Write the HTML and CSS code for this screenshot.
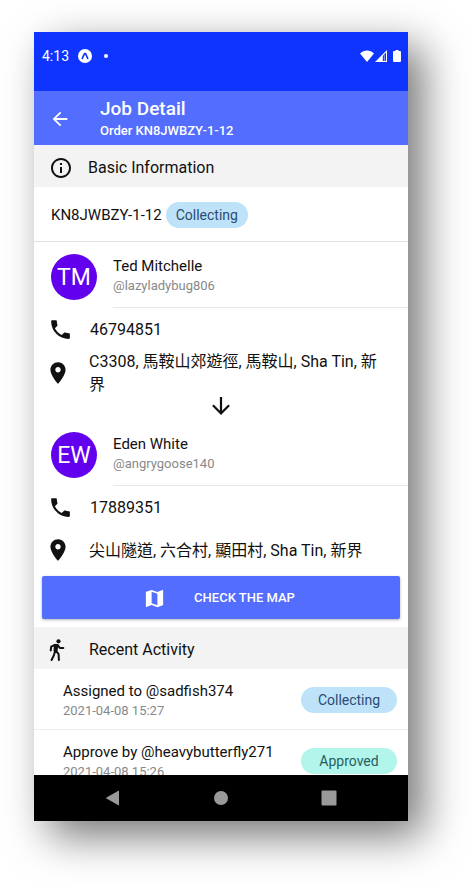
FILE: index.html
```html
<!DOCTYPE html>
<html lang="en">
<head>
<meta charset="utf-8">
<meta name="viewport" content="width=device-width, initial-scale=1">
<title>Job Detail</title>
<link rel="stylesheet" href="styles.css">
</head>
<body>
<div class="phone">
  <div class="status">
    <span class="time">4:13</span>
    <svg class="expo" viewBox="0 0 14 14"><circle cx="7" cy="7" r="7" fill="#fff"/><path d="M4.300 9.400 6.500 4.600h1l2.200 4.800" fill="none" stroke="#1034ff" stroke-width="1.600" stroke-linecap="round" stroke-linejoin="round"/></svg>
    <span class="dot"></span>
    <span class="signals">
      <svg width="14" height="12" viewBox="0 0 14 12"><path d="M0 3.400C4 -.6 10 -.6 14 3.400L7 12z" fill="#fff"/></svg>
      <svg width="12" height="12" viewBox="0 0 12 12"><path d="M12 0v12H0z" fill="#fff"/><path d="M7.800 6 11 2.600V11H7.800z" fill="#1034ff"/><path d="M9.400 5v6" stroke="#8fa0ff" stroke-width="1"/></svg>
      <svg class="battery" width="8" height="12" viewBox="0 0 8 12"><path d="M2.500 0h3v1H7q1 0 1 1v9q0 1-1 1H1q-1 0-1-1V2q0-1 1-1h1.500z" fill="#fff"/></svg>
    </span>
  </div>
  <header class="appbar">
    <button class="back" aria-label="Back"><svg width="22" height="22" viewBox="0 0 24 24"><path d="M20 11H7.830l5.590-5.590L12 4l-8 8 8 8 1.410-1.410L7.830 13H20z"/></svg></button>
    <div>
      <h1>Job Detail</h1>
      <p class="subtitle">Order KN8JWBZY-1-12</p>
    </div>
  </header>
  <main>
    <h2 class="section">
      <svg width="24" height="24" viewBox="0 0 24 24"><path d="M11 17h2v-6h-2zm1-15C6.480 2 2 6.480 2 12s4.480 10 10 10 10-4.480 10-10S17.520 2 12 2m0 18c-4.410 0-8-3.590-8-8s3.590-8 8-8 8 3.590 8 8-3.590 8-8 8M11 9h2V7h-2z"/></svg>
      Basic Information
    </h2>
    <div class="order">KN8JWBZY-1-12 <span class="chip collecting">Collecting</span></div>
    <div class="person">
      <span class="avatar">TM</span>
      <div class="who"><p class="name">Ted Mitchelle</p><p class="meta">@lazyladybug806</p></div>
    </div>
    <div class="line phone-line">
      <svg width="25" height="25" viewBox="0 0 24 24"><path d="M6.620 10.790c1.440 2.830 3.760 5.140 6.590 6.590l2.200-2.200c.27-.27.67-.36 1.020-.24 1.120.37 2.330.57 3.570.57.550 0 1 .45 1 1V20c0 .55-.45 1-1 1-9.390 0-17-7.610-17-17 0-.55.450-1 1-1h3.500c.55 0 1 .45 1 1 0 1.250.2 2.450.57 3.570.110.350.030.740-.250 1.020z"/></svg>
      <span>46794851</span>
    </div>
    <div class="line address">
      <svg width="26" height="26" viewBox="0 0 24 24"><path d="M12 2C8.130 2 5 5.130 5 9c0 5.250 7 13 7 13s7-7.750 7-13c0-3.870-3.130-7-7-7m0 9.500c-1.380 0-2.500-1.120-2.500-2.500s1.120-2.500 2.500-2.500 2.500 1.120 2.500 2.500-1.120 2.500-2.500 2.500"/></svg>
      <span>C3308, 馬鞍山郊遊徑, 馬鞍山, Sha Tin, 新界</span>
    </div>
    <div class="down"><svg width="20" height="20" viewBox="3 3 18 18"><path d="m20 12-1.410-1.410L13 16.170V4h-2v12.170l-5.580-5.590L4 12l8 8z"/></svg></div>
    <div class="person">
      <span class="avatar">EW</span>
      <div class="who"><p class="name">Eden White</p><p class="meta">@angrygoose140</p></div>
    </div>
    <div class="line phone-line">
      <svg width="25" height="25" viewBox="0 0 24 24"><path d="M6.620 10.790c1.440 2.830 3.760 5.140 6.590 6.590l2.200-2.200c.27-.27.67-.36 1.020-.24 1.120.37 2.330.57 3.570.57.550 0 1 .45 1 1V20c0 .55-.45 1-1 1-9.390 0-17-7.610-17-17 0-.55.450-1 1-1h3.500c.55 0 1 .45 1 1 0 1.250.2 2.450.57 3.570.110.350.030.740-.250 1.020z"/></svg>
      <span>17889351</span>
    </div>
    <div class="line address">
      <svg width="26" height="26" viewBox="0 0 24 24"><path d="M12 2C8.130 2 5 5.130 5 9c0 5.250 7 13 7 13s7-7.750 7-13c0-3.870-3.130-7-7-7m0 9.500c-1.380 0-2.500-1.120-2.500-2.500s1.120-2.500 2.500-2.500 2.500 1.120 2.500 2.500-1.120 2.500-2.500 2.500"/></svg>
      <span>尖山隧道, 六合村, 顯田村, Sha Tin, 新界</span>
    </div>
    <button class="map">
      <svg width="23" height="23" viewBox="0 0 24 24"><path d="m20.500 3-.16.030L15 5.100 9 3 3.360 4.900c-.21.070-.36.250-.36.480V20.500c0 .28.220.5.500.5l.16-.030L9 18.900l6 2.100 5.640-1.900c.210-.070.360-.250.360-.480V3.500c0-.28-.22-.5-.5-.5M15 19l-6-2.110V5l6 2.110z"/></svg>
      CHECK THE MAP
    </button>
    <h2 class="section walk">
      <svg width="16" height="22" viewBox="0 0 16 22"><circle cx="9.500" cy="2.300" r="2.100"/><path d="M5.600 5.600h3l-.8 6.800-2.600-.6z" stroke="currentColor" stroke-width="1.400" stroke-linejoin="round"/><path d="M6 5.800 2.200 7.600 1.700 11.400M8.600 6l2.200 2.900h3.500M6.200 11.500 5 16l-2.400 5M7.200 12l2.400 3.200.3 5.800" fill="none" stroke="currentColor" stroke-width="2" stroke-linecap="round" stroke-linejoin="round"/></svg>
      Recent Activity
    </h2>
    <ul class="activity">
      <li><div><p class="name">Assigned to @sadfish374</p><p class="meta">2021-04-08 15:27</p></div><span class="chip collecting">Collecting</span></li>
      <li><div><p class="name">Approve by @heavybutterfly271</p><p class="meta">2021-04-08 15:26</p></div><span class="chip approved">Approved</span></li>
    </ul>
  </main>
  <nav class="navbar">
    <button aria-label="Back"><svg width="16" height="16" viewBox="0 0 16 16"><path d="M14 1v14q0 .6-.6.300L1.500 8.500q-.8-.5 0-1L13.400.7Q14 .4 14 1z"/></svg></button>
    <button aria-label="Home"><svg width="16" height="16" viewBox="0 0 16 16"><circle cx="8" cy="8" r="7"/></svg></button>
    <button aria-label="Recent apps"><svg width="16" height="16" viewBox="0 0 16 16"><rect x=".5" y=".5" width="15" height="15" rx="1"/></svg></button>
  </nav>
</div>
</body>
</html>
```
FILE: styles.css
```css
* { box-sizing: border-box; }
body {
  margin: 0;
  height: 100vh;
  padding: 32px 64px 66px 34px;
  display: flex;
  background: #fff;
  color: #111;
  font: 16px/20px Roboto, "Noto Sans CJK TC", sans-serif;
}
h1, h2, p, ul { margin: 0; padding: 0; font-weight: 400; }
button { border: 0; padding: 0; background: none; font: inherit; color: inherit; }
svg { display: block; flex: none; fill: currentColor; }

.phone {
  flex: 1;
  min-width: 0;
  display: flex;
  flex-direction: column;
  background: #fff;
  box-shadow: 15px 15px 40px rgba(0, 0, 0, .54);
}
.status {
  flex: none;
  display: flex;
  align-items: center;
  height: 59px;
  padding: 0 7px 12px 8px;
  background: #1034ff;
  color: #fff;
  font-size: 14px;
}
.expo { width: 14px; height: 14px; margin-left: 9px; }
.dot { width: 4px; height: 4px; margin-left: 12px; border-radius: 50%; background: #fff; }
.signals { display: flex; gap: 1px; margin-left: auto; }
.battery { margin-left: 5px; }

.appbar {
  flex: none;
  display: flex;
  align-items: center;
  gap: 29px;
  height: 54px;
  padding: 2px 0 0 15px;
  background: #536dfe;
  color: #fff;
}
.appbar h1 { font-size: 19px; line-height: 24px; font-weight: 500; }
.subtitle { font-size: 13px; line-height: 20px; font-weight: 500; }

main { flex: 1; min-height: 0; overflow: hidden; }
.section {
  display: flex;
  align-items: center;
  gap: 15px;
  height: 42px;
  padding: 3px 15px 0;
  background: #f3f3f3;
  font-size: 16px;
}
.walk { gap: 24px; }
.order {
  display: flex;
  align-items: center;
  gap: 4px;
  height: 55px;
  padding: 1px 0 0 17px;
  border-bottom: 1px solid #e0e0e0;
  font-size: 15px;
}
.chip { border-radius: 13px; line-height: 26px; font-size: 14px; text-align: center; }
.collecting { background: #bee3f8; color: #2c4a74; }
.approved { background: #b2f5ea; color: #285e61; }
.order .chip { padding: 0 10px; }

.person { display: flex; gap: 16px; height: 66px; padding-left: 17px; }
.avatar {
  width: 46px;
  height: 46px;
  margin-top: 12px;
  border-radius: 50%;
  background: #6200ee;
  color: #fff;
  font-size: 23px;
  line-height: 48px;
  text-align: center;
}
.who { flex: 1; padding-top: 14px; border-bottom: 1px solid #e8e8e8; }
.name { font-size: 15px; line-height: 20px; color: #111; }
.meta { font-size: 13px; line-height: 19px; color: #888; }

.line { display: flex; align-items: center; padding: 0 16px 0 11px; line-height: 23px; }
.phone-line { gap: 17px; height: 42px; padding: 1px 0 0 14px; }
.address { gap: 18px; min-height: 44px; }
.down { display: flex; justify-content: center; height: 24px; }

.map {
  display: flex;
  align-items: center;
  justify-content: center;
  gap: 28px;
  width: calc(100% - 16px);
  height: 43px;
  margin: 4px 8px 8px;
  padding: 1px 4px 0 0;
  border-radius: 2px;
  background: #536dfe;
  box-shadow: 0 1px 3px rgba(0, 0, 0, .3);
  color: #fff;
  font-size: 13px;
  font-weight: 500;
}
.activity { list-style: none; }
.activity li {
  display: flex;
  align-items: center;
  justify-content: space-between;
  height: 61px;
  padding: 2px 11px 0 29px;
  border-bottom: 1px solid #eee;
}
.activity .chip { width: 96px; }

.navbar {
  flex: none;
  display: flex;
  align-items: center;
  justify-content: center;
  gap: 78px;
  height: 46px;
  background: #000;
  color: #999;
}
.navbar button { padding: 0 7px; }
```
